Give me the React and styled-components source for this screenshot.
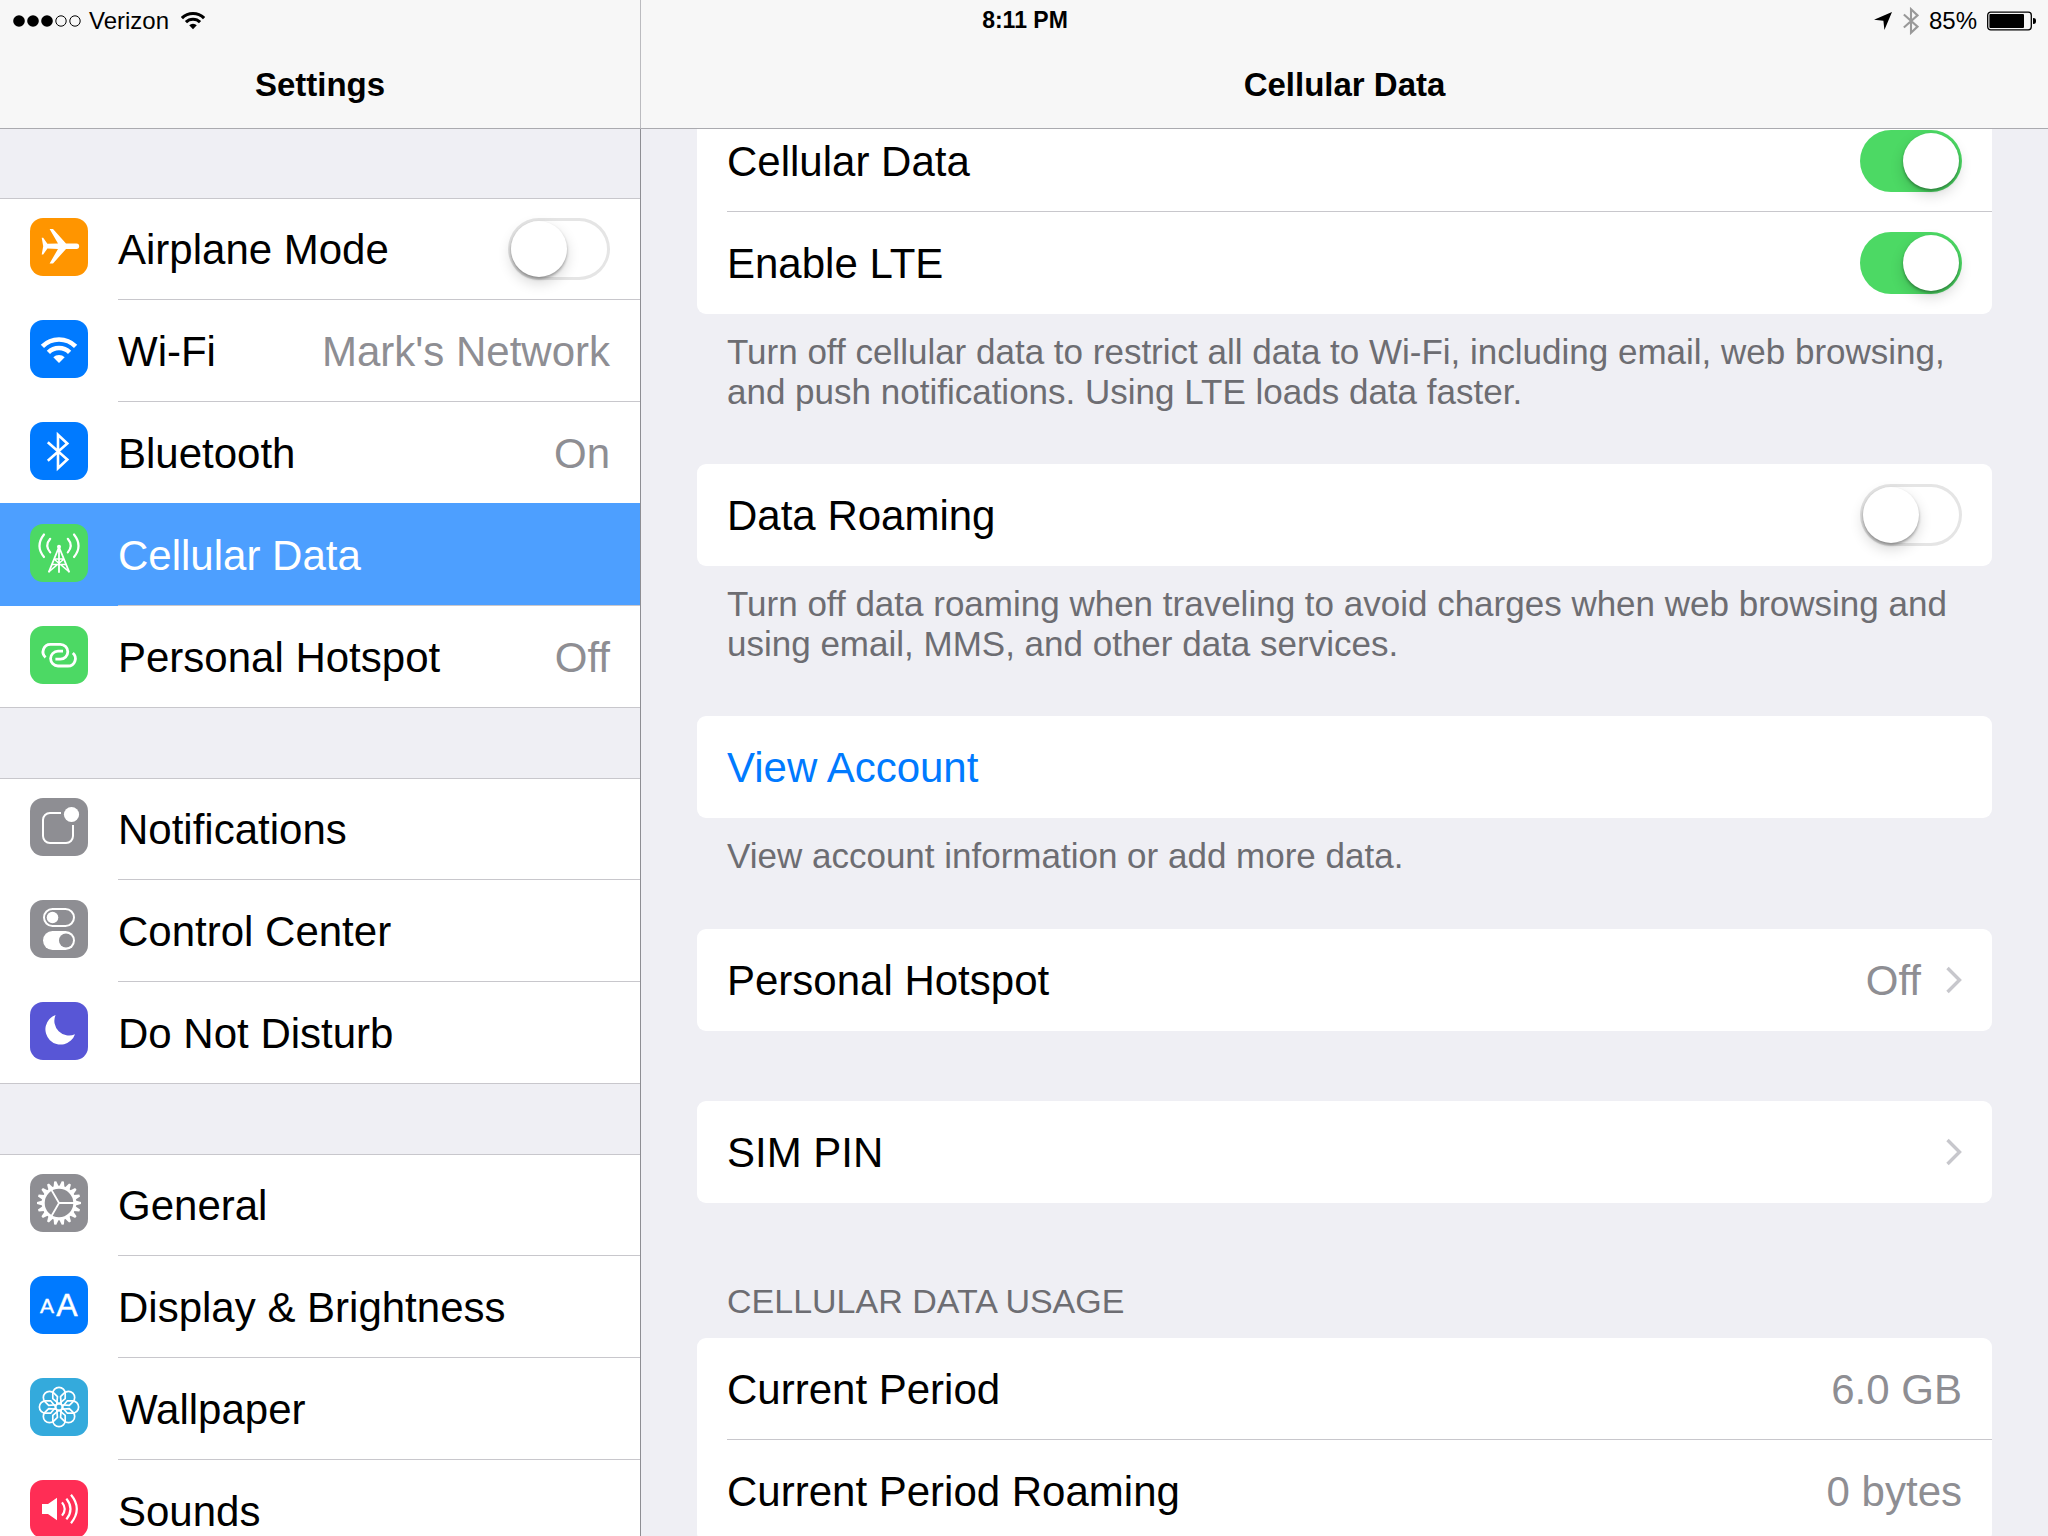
import React from "react";
import styled, { createGlobalStyle, css } from "styled-components";

const teeth = Array.from({ length: 18 }, (_, i) => i * 20);
const petals = Array.from({ length: 8 }, (_, i) => i * 45);

const BluetoothShape = (props) => (
  <path
    d="M17.8 20.3L37.3 37.5L28 46.3V12.7L37.3 21.5L17.8 38.7"
    fill="none"
    stroke={props.color}
    strokeWidth={props.width}
  />
);

const WifiShape = (props) => (
  <g fill="none" stroke={props.color} strokeWidth="4.6">
    <path d="M12.4 26.4A23.5 23.5 0 0 1 45.6 26.4" />
    <path d="M18.4 32.4A15 15 0 0 1 39.6 32.4" />
    <path d="M29 43L23.3 37.3A8 8 0 0 1 34.7 37.3Z" fill={props.color} stroke="none" />
  </g>
);

const glyphs = {
  airplane: (
    <path
      fill="#fff"
      d="M46.4 25.4c2 0 2.8 1.2 2.8 2.8s-.8 2.8-2.8 2.8H36L23 45.4H19.6L28 31L17.4 30.6L13.2 36.6H11.7L13.2 28.2L11.7 19.8H13.2L17.4 25.8L28 25.4L19.6 11H23L36 25.4Z"
    />
  ),
  wifi: <WifiShape color="#fff" />,
  bluetooth: <BluetoothShape color="#fff" width="2.6" />,
  cellular: (
    <g fill="none" stroke="#fff" strokeWidth="2.2" strokeLinecap="round">
      <path d="M14 10.5Q5 22 14 33" />
      <path d="M20.2 14.8Q14.4 21.6 20.2 28.4" />
      <path d="M44 10.5Q53 22 44 33" />
      <path d="M37.8 14.8Q43.6 21.6 37.8 28.4" />
      <path d="M29 24V48M28.6 24L19 47.6M29.4 24L39 47.6" strokeWidth="1.8" />
      <path d="M25 35H33M19 47.6L33.5 35.5M39 47.6L24.5 35.5M22 40.6H36" strokeWidth="1.5" />
      <circle cx="29" cy="22.8" r="2" fill="#fff" stroke="none" />
    </g>
  ),
  hotspot: (
    <g fill="none" stroke="#fff" strokeWidth="2.8">
      <path d="M25.4 33.2H30.4A7.4 7.4 0 0 0 30.4 18.4H20.4A7.4 7.4 0 0 0 15.6 31.4" />
      <path d="M33 25.2H28A7.4 7.4 0 0 0 28 40H38A7.4 7.4 0 0 0 42.8 27" />
    </g>
  ),
  notifications: (
    <g>
      <path
        d="M31 15H20a7 7 0 0 0-7 7v16a7 7 0 0 0 7 7h16a7 7 0 0 0 7-7V27"
        fill="none"
        stroke="#fff"
        strokeWidth="2"
      />
      <circle cx="41.5" cy="16.5" r="7.6" fill="#fff" />
    </g>
  ),
  control: (
    <g>
      <rect x="14" y="9" width="30" height="17" rx="8.5" fill="none" stroke="#fff" strokeWidth="2" />
      <circle cx="22.5" cy="17.5" r="5.8" fill="#fff" />
      <rect x="13" y="31" width="32" height="19" rx="9.5" fill="#fff" />
      <circle cx="36" cy="40.5" r="7" fill="#8e8e93" />
    </g>
  ),
  moon: <path fill="#fff" d="M25.6 13A15.2 15.2 0 1 0 45 32.2A14.6 14.6 0 0 1 25.6 13Z" />,
  gear: (
    <g fill="none" stroke="#fff">
      <circle cx="29" cy="29" r="15.8" strokeWidth="3" />
      <path d="M29 29H44M29 29L21.5 16M29 29L21.5 42" strokeWidth="1.8" />
      {teeth.map((deg) => (
        <path
          key={deg}
          d="M45.5 26.4L51 27.9V30.1L45.5 31.6Z"
          fill="#fff"
          stroke="none"
          transform={`rotate(${deg} 29 29)`}
        />
      ))}
    </g>
  ),
  display: (
    <g fill="#fff" stroke="#fff" strokeWidth="0.4" textAnchor="middle">
      <text x="17" y="37" fontSize="21">
        A
      </text>
      <text x="37" y="40" fontSize="32">
        A
      </text>
    </g>
  ),
  wallpaper: (
    <g fill="none" stroke="#fff" strokeWidth="1.7" strokeLinejoin="round">
      <circle cx="29" cy="29" r="3.4" />
      {petals.map((deg) => (
        <path
          key={deg}
          d="M29 25.8L22.8 20.6V15.6A6.2 6.2 0 0 1 35.2 15.6V20.6Z"
          transform={`rotate(${deg} 29 29)`}
        />
      ))}
    </g>
  ),
  sounds: (
    <g fill="none" stroke="#fff" strokeWidth="2.2">
      <path d="M12 24H18L27 17.8V40.2L18 34H12Z" fill="#fff" stroke="none" />
      <path d="M32 22.4Q37.4 29 32 35.6" />
      <path d="M36.4 18.6Q44.6 29 36.4 39.4" />
      <path d="M41 14.8Q52.6 29 41 43.2" />
    </g>
  ),
};

const sidebarGroups = [
  [
    { icon: "airplane", color: "#ff9500", label: "Airplane Mode", toggle: true },
    { icon: "wifi", color: "#007aff", label: "Wi-Fi", value: "Mark's Network" },
    { icon: "bluetooth", color: "#007aff", label: "Bluetooth", value: "On" },
    { icon: "cellular", color: "#4cd964", label: "Cellular Data", selected: true },
    { icon: "hotspot", color: "#4cd964", label: "Personal Hotspot", value: "Off" },
  ],
  [
    { icon: "notifications", color: "#8e8e93", label: "Notifications" },
    { icon: "control", color: "#8e8e93", label: "Control Center" },
    { icon: "moon", color: "#5856d6", label: "Do Not Disturb" },
  ],
  [
    { icon: "gear", color: "#8e8e93", label: "General" },
    { icon: "display", color: "#007aff", label: "Display & Brightness" },
    { icon: "wallpaper", color: "#34aadc", label: "Wallpaper" },
    { icon: "sounds", color: "#ff2d55", label: "Sounds" },
  ],
];

const Chevron = () => (
  <svg width="17" height="28" viewBox="0 0 17 28" aria-hidden="true">
    <path d="M2.5 2L14.5 14L2.5 26" fill="none" stroke="#c7c7cc" strokeWidth="3.4" />
  </svg>
);

const SidebarRow = ({ item }) => (
  <Row
    as={item.toggle ? "label" : "a"}
    href={item.toggle ? undefined : "#"}
    $selected={item.selected}
    aria-current={item.selected ? "page" : undefined}
  >
    <AppIcon viewBox="0 0 58 58" $color={item.color} aria-hidden="true">
      {glyphs[item.icon]}
    </AppIcon>
    <RowBody>
      <Label>{item.label}</Label>
      {item.value && <Value>{item.value}</Value>}
      {item.toggle && <Toggle type="checkbox" />}
    </RowBody>
  </Row>
);

const StatusBar = () => (
  <StatusBarDiv>
    <StatusSide>
      <svg width="68" height="12" viewBox="0 0 68 12" aria-label="Signal strength">
        {[0, 1, 2, 3, 4].map((n) => (
          <circle
            key={n}
            cx={6 + n * 14}
            cy="6"
            r={n < 3 ? 5.8 : 5.2}
            fill={n < 3 ? "#000" : "none"}
            stroke="#000"
            strokeWidth={n < 3 ? 0 : 1}
          />
        ))}
      </svg>
      <span>Verizon</span>
      <WifiStatus viewBox="11 16 36 28" aria-label="Wi-Fi">
        <WifiShape color="#000" />
      </WifiStatus>
    </StatusSide>
    <Clock>8:11 PM</Clock>
    <StatusSide $end>
      <svg width="20" height="20" viewBox="0 0 20 20" aria-label="Location">
        <path d="M1 8.8L19 1L11.4 19L10.4 9.8Z" />
      </svg>
      <svg width="16" height="28" viewBox="17 9.5 22 40" aria-label="Bluetooth">
        <BluetoothShape color="#999" width="3" />
      </svg>
      <span>85%</span>
      <svg width="50" height="20" viewBox="0 0 50 20" aria-label="Battery">
        <rect x="0.7" y="1.2" width="43.6" height="17.6" rx="3" fill="none" stroke="#000" strokeWidth="1.3" />
        <rect x="2.4" y="3" width="34.6" height="14" rx="1" />
        <path d="M46 7c2.6 0 3 1 3 3s-.4 3-3 3z" />
      </svg>
    </StatusSide>
  </StatusBarDiv>
);

const App = () => {
  return (
    <>
      <GlobalStyle />
      <Screen>
        <StatusBar />
        <Pane>
          <PaneHeader>
            <Title>Settings</Title>
          </PaneHeader>
          <SidebarBody as="nav">
            {sidebarGroups.map((group, i) => (
              <SidebarGroup key={i}>
                {group.map((item) => (
                  <SidebarRow item={item} key={item.label} />
                ))}
              </SidebarGroup>
            ))}
          </SidebarBody>
        </Pane>

        <Pane as="main" $detail>
          <PaneHeader>
            <Title>Cellular Data</Title>
          </PaneHeader>
          <PaneBody>
            <DetailContent>
              <Card>
                <Row as="label">
                  <RowBody>
                    <Label>Cellular Data</Label>
                    <Toggle type="checkbox" defaultChecked />
                  </RowBody>
                </Row>
                <Row as="label">
                  <RowBody>
                    <Label>Enable LTE</Label>
                    <Toggle type="checkbox" defaultChecked />
                  </RowBody>
                </Row>
              </Card>
              <Note>
                Turn off cellular data to restrict all data to Wi-Fi, including email, web browsing,
                and push notifications. Using LTE loads data faster.
              </Note>

              <Card>
                <Row as="label">
                  <RowBody>
                    <Label>Data Roaming</Label>
                    <Toggle type="checkbox" />
                  </RowBody>
                </Row>
              </Card>
              <Note>
                Turn off data roaming when traveling to avoid charges when web browsing and using
                email, MMS, and other data services.
              </Note>

              <Card>
                <Row as="button" type="button" $action>
                  <RowBody>
                    <Label>View Account</Label>
                  </RowBody>
                </Row>
              </Card>
              <Note>View account information or add more data.</Note>

              <Card>
                <Row as="a" href="#">
                  <RowBody>
                    <Label>Personal Hotspot</Label>
                    <Value>Off</Value>
                    <Chevron />
                  </RowBody>
                </Row>
              </Card>

              <Card $spaced>
                <Row as="a" href="#">
                  <RowBody>
                    <Label>SIM PIN</Label>
                    <Chevron />
                  </RowBody>
                </Row>
              </Card>

              <SectionTitle>CELLULAR DATA USAGE</SectionTitle>
              <Card>
                <Row>
                  <RowBody>
                    <Label>Current Period</Label>
                    <Value>6.0 GB</Value>
                  </RowBody>
                </Row>
                <Row>
                  <RowBody>
                    <Label>Current Period Roaming</Label>
                    <Value>0 bytes</Value>
                  </RowBody>
                </Row>
              </Card>
            </DetailContent>
          </PaneBody>
        </Pane>
      </Screen>
    </>
  );
};

const GlobalStyle = createGlobalStyle`
  * {
    box-sizing: border-box;
  }

  body {
    margin: 0;
    background-color: #efeff4;
    color: #000;
    font-family: "Liberation Sans", Arial, sans-serif;
  }

  svg {
    flex-shrink: 0;
  }
`;

const Screen = styled.div`
  position: relative;
  display: grid;
  grid-template-columns: 641px 1fr;
  height: 100vh;
  overflow: hidden;
`;

/* one bar that runs over the headers of both panes */
const StatusBarDiv = styled.div`
  position: absolute;
  top: 0;
  left: 0;
  right: 0;
  height: 41px;
  padding: 0 11px 0 13px;
  display: grid;
  grid-template-columns: 1fr auto 1fr;
  align-items: center;
  font-size: 24px;
`;

const StatusSide = styled.div`
  display: flex;
  align-items: center;
  gap: ${(props) => (props.$end ? "10px" : "8px")};
  justify-content: ${(props) => (props.$end ? "flex-end" : "flex-start")};
`;

const WifiStatus = styled.svg`
  width: 24px;
  height: 19px;
  margin-left: 4px;
`;

const Clock = styled.time`
  font-size: 23px;
  font-weight: 700;
`;

const Pane = styled.section`
  display: flex;
  flex-direction: column;
  min-width: 0;
  min-height: 0;

  ${(props) =>
    !props.$detail &&
    css`
      > * {
        border-right: 1px solid #8e8e93;
      }

      > header {
        border-right-color: #bbbbbf;
      }
    `}
`;

const PaneHeader = styled.header`
  flex-shrink: 0;
  height: 129px;
  padding-bottom: 23px;
  display: flex;
  align-items: flex-end;
  justify-content: center;
  background-color: #f7f7f7;
  border-bottom: 1px solid #aaaaaf;
`;

const Title = styled.h1`
  margin: 0;
  font-size: 33px;
  line-height: 40px;
  font-weight: 700;
`;

const PaneBody = styled.div`
  flex: 1;
  min-height: 0;
  overflow: hidden;
`;

const SidebarBody = styled(PaneBody)`
  padding-top: 69px;
`;

/* the list is scrolled a little way under the header */
const DetailContent = styled.div`
  margin-top: -19px;
  padding: 0 56px;
`;

const AppIcon = styled.svg`
  width: 58px;
  height: 58px;
  margin: 0 30px 4px 0;
  border-radius: 13px;
  background-color: ${(props) => props.$color};
`;

const RowBody = styled.span`
  flex: 1;
  align-self: stretch;
  min-width: 0;
  padding-right: 30px;
  display: flex;
  align-items: center;
  gap: 24px;
  border-bottom: 1px solid #c8c7cc;
`;

const Label = styled.span`
  flex: 1;
  padding-top: 2px;
  white-space: nowrap;
`;

const Value = styled.span`
  padding-top: 2px;
  color: #8e8e93;
  white-space: nowrap;
`;

const Row = styled.div`
  width: 100%;
  height: 102px;
  flex-shrink: 0;
  padding: 0 0 0 30px;
  display: flex;
  align-items: center;
  border: none;
  background: none;
  color: ${(props) => (props.$action ? "#007aff" : "#000")};
  font-family: inherit;
  font-size: 42px;
  text-align: left;
  text-decoration: none;

  &:last-child ${RowBody} {
    border-bottom-color: transparent;
  }

  ${(props) =>
    props.$selected &&
    css`
      color: #fff;
      background-color: #4d9fff;
      box-shadow: 0 -1px #4d9fff;
    `}
`;

const SidebarGroup = styled.div`
  margin-bottom: 70px;
  display: flex;
  flex-direction: column;
  background-color: #fff;
  box-shadow: inset 0 1px #c8c7cc, inset 0 -1px #c8c7cc;
`;

const Card = styled.div`
  margin-top: ${(props) => (props.$spaced ? "70px" : "0")};
  border-radius: 9px;
  background-color: #fff;
`;

const Note = styled.p`
  margin: 0;
  min-height: 111px;
  padding: 18px 30px 52px;
  color: #6d6d72;
  font-size: 35px;
  line-height: 40px;
`;

const SectionTitle = styled.h2`
  margin: 0;
  padding: 78px 30px 17px;
  color: #6d6d72;
  font-size: 34px;
  line-height: 40px;
  font-weight: 400;
`;

const Toggle = styled.input`
  appearance: none;
  flex-shrink: 0;
  width: 102px;
  height: 62px;
  margin: 0;
  padding: 3px;
  display: flex;
  border-radius: 31px;
  background-color: #fff;
  box-shadow: inset 0 0 0 3px #e5e5e5;

  &::before {
    content: "";
    width: 56px;
    height: 56px;
    border-radius: 50%;
    background-color: #fff;
    box-shadow: 0 6px 14px rgba(0, 0, 0, 0.16), 0 2px 3px rgba(0, 0, 0, 0.32);
  }

  &:checked {
    justify-content: flex-end;
    background-color: #4cd964;
    box-shadow: none;
  }
`;

export default App;
